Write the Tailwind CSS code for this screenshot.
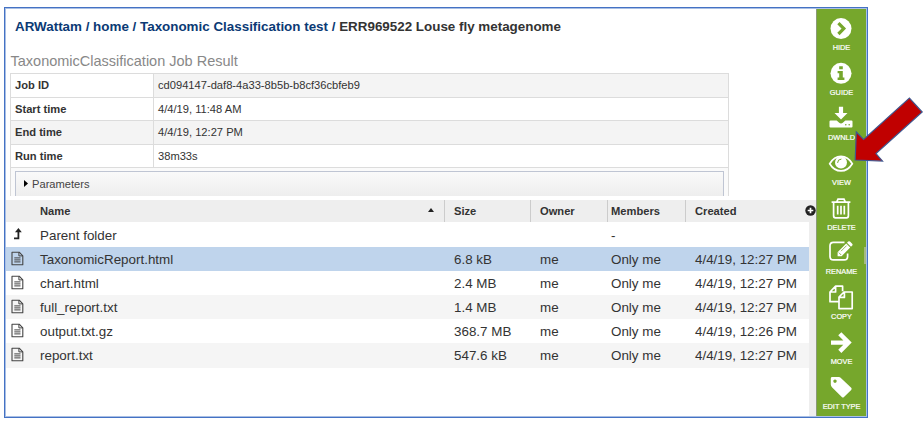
<!DOCTYPE html>
<html lang="en">
<head>
<meta charset="utf-8">
<title>Taxonomic Classification Job Result</title>
<script src="https://cdn.jsdelivr.net/npm/@tailwindcss/browser@4"></script>
</head>
<body class="bg-white overflow-hidden font-['Liberation_Sans',Arial,sans-serif] text-[#333]">
<svg class="hidden">
  <symbol id="file" viewBox="0 0 13 15"><path d="M1 1.2h7.2l3.6 3.6v8.9H1z" fill="none" stroke="#444" stroke-width="1.1" stroke-linejoin="round"/><path d="M7.9 1.2v3.7h3.9" fill="none" stroke="#444"/><path d="M3.3 6.9h6.2M3.3 8.9h6.2M3.3 10.9h6.2" stroke="#444" stroke-width="1"/></symbol>
</svg>
<div class="relative w-[924px] h-[424px] pl-1 pt-[7px]">
  <div class="flex w-[864px] h-[411px] border border-[#4472c4] outline outline-[#a9bfe4] -outline-offset-2">
    <main class="flex flex-col w-[811px] h-full">
      <h1 class="pl-[10px] pt-[11px] h-[44px] text-[13.4px] leading-4 font-bold whitespace-nowrap"><span class="text-[#0b3a75]">ARWattam / home / Taxonomic Classification test /</span> ERR969522 Louse fly metagenome</h1>
      <h2 class="pl-[5.5px] h-[21px] text-[14.5px] leading-4 text-[#888] whitespace-nowrap"><span class="relative top-px">TaxonomicClassification Job Result</span></h2>
      <section class="ml-[5px] w-[719px] h-[123px] border border-b-0 border-[#dcdcdc] text-[11.15px] overflow-hidden shrink-0">
        <div class="flex h-[23.5px] border-b border-[#dcdcdc] items-center"><b class="w-[143px] h-full pl-1 leading-[22px] border-r border-[#dcdcdc]">Job ID</b><span class="flex-1 h-full pl-1 leading-[22px] bg-[#f4f4f4]">cd094147-daf8-4a33-8b5b-b8cf36cbfeb9</span></div>
        <div class="flex h-[23.5px] border-b border-[#dcdcdc] items-center"><b class="w-[143px] h-full pl-1 leading-[22px] border-r border-[#dcdcdc]">Start time</b><span class="flex-1 h-full pl-1 leading-[22px]">4/4/19, 11:48 AM</span></div>
        <div class="flex h-[23.5px] border-b border-[#dcdcdc] items-center bg-[#f4f4f4]"><b class="w-[143px] h-full pl-1 leading-[22px] border-r border-[#dcdcdc]">End time</b><span class="flex-1 h-full pl-1 leading-[22px]">4/4/19, 12:27 PM</span></div>
        <div class="flex h-[23.5px] border-b border-[#dcdcdc] items-center"><b class="w-[143px] h-full pl-1 leading-[22px] border-r border-[#dcdcdc]">Run time</b><span class="flex-1 h-full pl-1 leading-[22px]">38m33s</span></div>
        <div class="h-[29px] bg-[#fafafa] pt-[3px] px-1">
          <div class="h-[30px] border border-[#bfc5d3] bg-linear-to-b from-[#fafafa] to-[#ececec] flex pl-[8px] gap-[4px] text-[#444]"><svg class="w-1 h-[7px] mt-[8px]" viewBox="0 0 4 7"><path d="M0 0l4 3.5L0 7z" fill="#000"/></svg><span class="leading-[25px]">Parameters</span></div>
        </div>
      </section>
      <div class="flex mt-[4px] h-[22px] shrink-0 bg-[#eee] text-[11.15px] font-bold leading-[22px]">
        <div class="w-[440px] pl-[35px] pr-[10px] flex justify-between items-center border-r border-[#ccc]">Name<svg class="w-[6px] h-[4px] -mt-[2px]" viewBox="0 0 6 4"><path d="M0 4L3 0l3 4z" fill="#222"/></svg></div>
        <div class="w-[86px] pl-[9px] border-r border-[#ccc]">Size</div>
        <div class="w-[77px] pl-[9px] border-r border-[#ccc]">Owner</div>
        <div class="w-[78px] pl-[3px] border-r border-[#ccc]">Members</div>
        <div class="flex-1 pl-[9px] flex justify-between">Created<svg class="w-[11px] h-[11px] mt-[5px]" viewBox="0 0 11 11"><circle cx="5.5" cy="5.5" r="5.2" fill="#222"/><path d="M5.5 2.7v5.6M2.7 5.5h5.6" stroke="#fff" stroke-width="1.7"/></svg></div>
      </div>
      <div class="flex flex-1 min-h-0">
        <div class="w-[804px] pt-[.5px] text-[13.4px] [&>div]:h-[24.2px] [&>div]:grid [&>div]:grid-cols-[35px_414px_86px_71px_84px_1fr] [&>div]:leading-[25px] [&>div]:whitespace-nowrap">
          <div><svg class="ml-[8px] mt-[5px] w-[9px] h-[12px]" viewBox="0 0 9 12"><path d="M1 10.4h4.4V4" fill="none" stroke="#222" stroke-width="1.8"/><path d="M5.4 0l3.4 4.3H2z" fill="#222"/></svg><span>Parent folder</span><span></span><span></span><span>-</span><span></span></div>
          <div class="bg-[#bfd4ec]"><svg class="ml-[6px] mt-1 w-[13px] h-[15px]"><use href="#file"/></svg><span>TaxonomicReport.html</span><span>6.8 kB</span><span>me</span><span>Only me</span><span>4/4/19, 12:27 PM</span></div>
          <div><svg class="ml-[6px] mt-1 w-[13px] h-[15px]"><use href="#file"/></svg><span>chart.html</span><span>2.4 MB</span><span>me</span><span>Only me</span><span>4/4/19, 12:27 PM</span></div>
          <div class="bg-[#f5f5f5]"><svg class="ml-[6px] mt-1 w-[13px] h-[15px]"><use href="#file"/></svg><span>full_report.txt</span><span>1.4 MB</span><span>me</span><span>Only me</span><span>4/4/19, 12:27 PM</span></div>
          <div><svg class="ml-[6px] mt-1 w-[13px] h-[15px]"><use href="#file"/></svg><span>output.txt.gz</span><span>368.7 MB</span><span>me</span><span>Only me</span><span>4/4/19, 12:26 PM</span></div>
          <div class="bg-[#f5f5f5]"><svg class="ml-[6px] mt-1 w-[13px] h-[15px]"><use href="#file"/></svg><span>report.txt</span><span>547.6 kB</span><span>me</span><span>Only me</span><span>4/4/19, 12:27 PM</span></div>
        </div>
        <div class="flex-1 bg-[#eee]"></div>
      </div>
    </main>
    <nav class="flex flex-col w-[50px] shrink-0 pt-[8px] bg-[#76a72c] border-l border-[#8a9a78] text-white text-[7.35px] [-webkit-text-stroke:0.2px_white] [&>div]:h-[44.9px] [&>div]:shrink-0 [&>div]:flex [&>div]:flex-col [&>div]:items-center [&>div]:whitespace-nowrap [&_span]:leading-[11px] [&_svg]:w-8 [&_svg]:h-[26px] [&_svg]:overflow-visible [&_svg]:-ml-px">
      <div><svg viewBox="0 0 32 26"><circle cx="16" cy="12.6" r="10.5" fill="#fff"/><path d="M13.4 7.2l5.4 5.4-5.4 5.4" fill="none" stroke="#76a72c" stroke-width="3.2"/></svg><span>HIDE</span></div>
      <div><svg viewBox="0 0 32 26"><circle cx="16" cy="12.3" r="10.5" fill="#fff"/><path d="M14.2 5.3h3.6v3h-3.6zM12.6 9.9h5.2v6.6h1.6v2.4h-6.8v-2.4h1.6v-4.2h-1.6z" fill="#76a72c"/></svg><span>GUIDE</span></div>
      <div><svg viewBox="0 0 32 26"><path d="M13.9 .8h4.2v6.2h4.4L16 13.6 9.5 7h4.4zM5.5 14.5h6.2l2.5 2.3q1.8 1.3 3.6 0l2.5-2.3h6.2q1 0 1 1v4.9q0 1-1 1h-21q-1 0-1-1v-4.9q0-1 1-1z" fill="#fff"/><circle cx="20.8" cy="18.8" r=".8" fill="#76a72c"/><circle cx="24.2" cy="18.8" r=".8" fill="#76a72c"/></svg><span>DWNLD</span></div>
      <div><svg viewBox="0 0 32 26"><path d="M4.7 12.7Q9 5.3 16 5.3T27.3 12.7Q23 19.9 16 19.9T4.7 12.7z" fill="none" stroke="#fff" stroke-width="1.7"/><circle cx="16" cy="11.5" r="6" fill="#fff"/><path d="M12.6 11.5q0-3.3 3.4-3.4" fill="none" stroke="#76a72c" stroke-width="1" stroke-linecap="round"/></svg><span>VIEW</span></div>
      <div><svg viewBox="0 0 32 26"><path d="M6.6 6.2h18.8M8.6 6.2v13.6q0 2 1.8 2h11.2q1.8 0 1.8-2V6.2M11.8 5.8l1.2-2.6h6L20.2 5.8M12.7 9.8v8.6M16 9.8v8.6M19.3 9.8v8.6" fill="none" stroke="#fff" stroke-width="1.7"/></svg><span>DELETE</span></div>
      <div><svg viewBox="0 0 32 26"><path d="M19.5 2.3H8.4q-3.4 0-3.4 3.4v10.7q0 3.4 3.4 3.4h10.8q3.4 0 3.4-3.4v-3" fill="none" stroke="#fff" stroke-width="1.7"/><path d="M12.6 12.2l8.6-8.6 4 4-8.6 8.6h-4zM22 2.8l1.2-1.2q.9-.8 1.8 0l2.2 2.2q.8.9 0 1.8L26 6.8z" fill="#fff"/><path d="M13.8 12.6l2.4 2.4M16 11.2l5.6-5.6" stroke="#76a72c" stroke-width=".8"/></svg><span>RENAME</span></div>
      <div><svg viewBox="0 0 32 26"><path d="M13.4 16.7H5V7l5.6-5.8h7v5M10.6 1.2V7H5M14 12l5-5h8.2v16.6H14zM19.4 6.8v5.6H14" fill="none" stroke="#fff" stroke-width="1.7" stroke-linejoin="round"/></svg><span>COPY</span></div>
      <div><svg viewBox="0 0 32 26"><path d="M6 12.6h17M14.8 3.8l8.8 8.8-8.8 8.8" fill="none" stroke="#fff" stroke-width="4.4"/></svg><span>MOVE</span></div>
      <div><svg viewBox="0 0 32 26"><path fill-rule="evenodd" d="M7.2 2h6.4q1.4 0 2.8 1.4l9.8 9.4q1 1.1 0 2.2l-7.2 7q-1.1 1-2.2 0L7.2 12.4Q5.8 11 5.8 9.6V3.4q0-1.4 1.4-1.4zM10 4.4a1.7 1.7 0 1 0 .01 0z" fill="#fff"/></svg><span>EDIT TYPE</span></div>
    </nav>
  </div>
  <div class="absolute left-[864px] top-[247px] w-[2px] h-[17px] bg-[#a5ba80]"></div>
  <svg class="absolute left-0 top-0 w-[924px] h-[424px] pointer-events-none" viewBox="0 0 924 424"><path d="M855.2 160L856.3 132 863.6 139.4 909.4 98 922.2 112 876 153.6 882.5 161z" fill="#c00000" stroke="#41578f" stroke-width="1.2"/></svg>
</div>
</body>
</html>
